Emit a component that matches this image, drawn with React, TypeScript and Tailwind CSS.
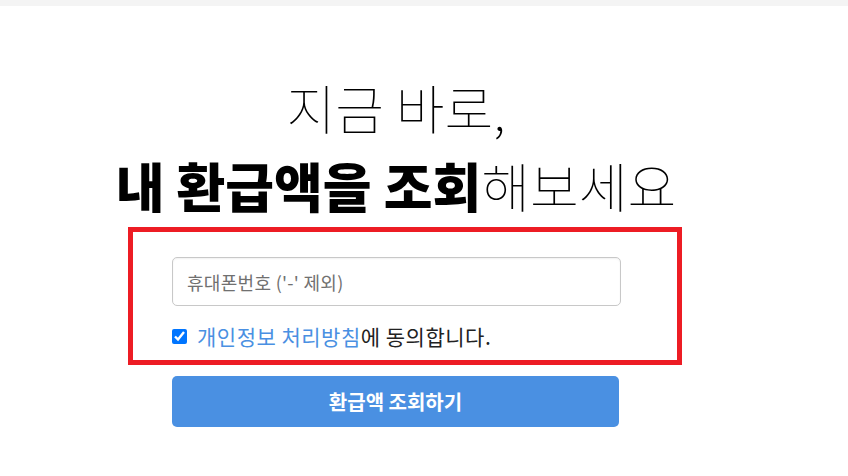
import React from "react";

export default function App() {
  const ko = { fontFamily: '"Noto Sans CJK KR", "Noto Sans", sans-serif' };
  return (
    <div className="w-[848px] h-[476px] bg-white overflow-hidden" style={ko}>
      <div className="h-[6px] bg-[#f4f4f4]" />
      <div className="w-[448px] ml-[172px] mt-[62px] flex flex-col items-center text-[53px] leading-[78px] text-black whitespace-nowrap">
        <div className="font-thin">지금 바로,</div>
        <div>
          <span className="font-black">내 환급액을 조회</span>
          <span className="font-thin">해보세요</span>
        </div>
      </div>
      <div className="ml-[128px] mt-[3px] w-[554px] h-[138px] border-[5px] border-[#ed1c24] pt-[25px] pl-[39px]">
        <input
          type="text"
          placeholder="휴대폰번호 ('-' 제외)"
          className="block w-[449px] h-[49px] rounded-[5px] border border-[#c8c8c8] px-[14px] text-[18px] tracking-[0.3px] text-[#333] placeholder:text-[#707070] outline-none shadow-[inset_0_1px_2px_rgba(0,0,0,0.06)]"
          style={ko}
        />
        <label className="mt-[20px] flex items-center gap-[10px] text-[21px] leading-[20px] text-[#222] tracking-[0.5px]">
          <input type="checkbox" defaultChecked className="w-[15px] h-[15px] m-0 accent-[#0075ff]" />
          <span>
            <span className="text-[#4a90e2]">개인정보 처리방침</span>에 동의합니다.
          </span>
        </label>
      </div>
      <button
        className="block ml-[172px] mt-[11px] w-[447px] h-[51px] rounded-[5px] bg-[#4a90e2] text-white text-[20px] font-bold"
        style={ko}
      >
        환급액 조회하기
      </button>
    </div>
  );
}
